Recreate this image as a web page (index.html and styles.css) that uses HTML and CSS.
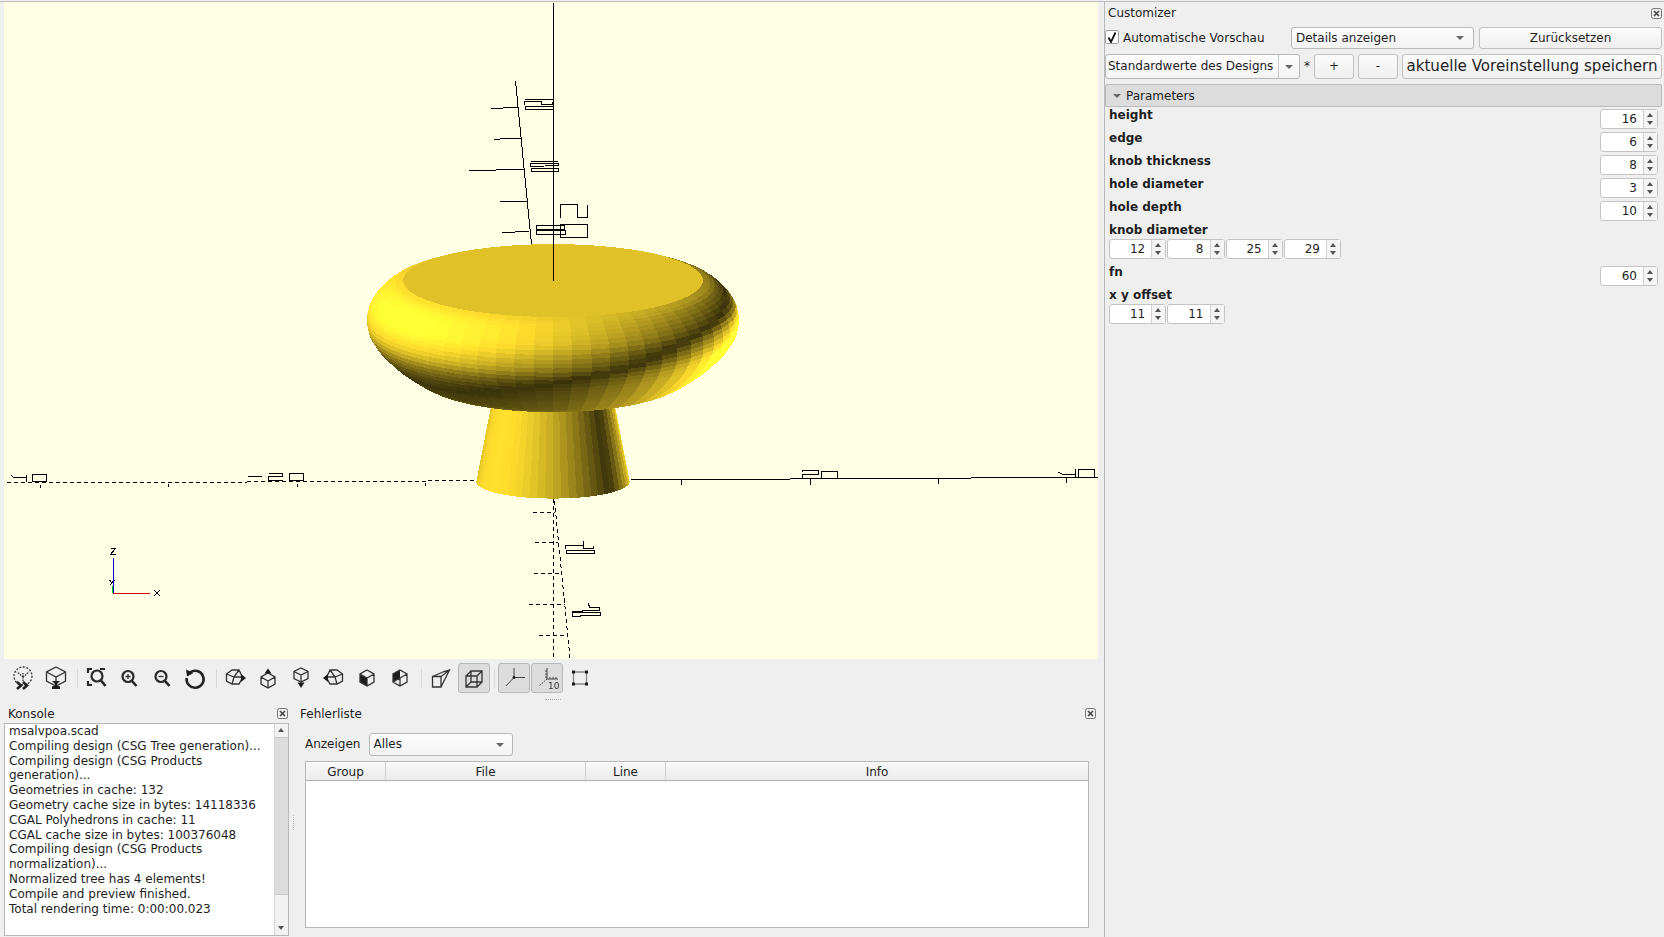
FILE: index.html
```html
<!DOCTYPE html>
<html lang="de">
<head>
<meta charset="utf-8">
<title>OpenSCAD</title>
<link rel="stylesheet" href="styles.css">
</head>
<body>
<svg class="defs" width="0" height="0" aria-hidden="true">
  <symbol id="close" viewBox="0 0 11 11">
    <rect x="0.5" y="0.5" width="10" height="10" rx="2" fill="none" stroke="#777"/>
    <path d="M3 3l5 5M8 3l-5 5" fill="none" stroke="#444" stroke-width="1.6"/>
  </symbol>
</svg>
<div class="app">
  <main class="left">
    <div class="viewport">
      <canvas id="preview" width="1094" height="657"></canvas>
      <svg class="overlay" viewBox="4 2 1094 657" width="1094" height="657" aria-hidden="true">
        <g class="ln">
          <path d="M553.5 3V281"/>
          <path d="M515.5 81L531.5 244"/>
          <path d="M491 108.5L503 108L518.5 107M494 139.5L511 138L521.5 138M469 170.5L524 169.5M500 201.5H527M502 232.5L529 231.5"/>
          <path d="M524.5 99.5H552.5M524.5 104.5V101.5H541.5V104.5H552.5V101.5M525.5 106.5H553V109.5H525.5Z"/>
          <path d="M530.5 161.5H558M530.5 163.5H558L558.7 165.5L530.5 166.5ZM531.5 168.5H558.5V171.5H531.5Z"/>
          <path d="M560.5 217.5V204.5H577V217.5H587.5V204.5M560.5 224.5H587.5V237.5H560.5ZM536 225.5H564V229H536ZM536 230.5H565V234H536Z"/>
          <path d="M631 479.5H790M790 478.5H971M971 477.5H1098"/>
          <path d="M681.5 480V485M810.5 479V485M938.5 478V484M1066.5 477V483"/>
          <path d="M802 472V470H818V474H802V478H818M821.500 471.500H837V478H821.500Z"/>
          <path d="M1058 472L1062 474H1075M1075 469V478M1078.500 469.500H1094V477H1078.500Z"/>
          <path d="M11 475.500L14 477.500H26.500M26.500 475V481.500M32.500 474.500H46.500V481.500H32.500Z"/>
          <path d="M248 476H262M268.500 473.500H282.500V476H268.500V480.500H282.500M289.500 473.500H303.500V480.500H289.500Z"/>
          <path d="M40.500 485V488M168.500 484V487M297.500 484V487M425.500 483V486"/>
          <path d="M565.500 549V545.500H583.500V548.500H593.500V546M583.500 541V545.500M566.500 550.500H594.500V553.500H566.500Z"/>
          <path d="M572 611.500H582V610.500H599.500V607.500H589.500L588.500 603.500M572.500 612.500H600.500V615.500H580V616.500H572.500Z"/>
          <path d="M110.500 548.500H115.500L110.500 554.500H115.500M154 590L160 596M160 590L154 596M109.500 580L112 583M114.500 580L109.500 585.500"/>
        </g>
        <g class="dash">
          <path d="M7 482.500H247M247 481.500H427M428 480.500H477"/>
          <path d="M553.500 499V659M554.500 501L570 658"/>
          <path d="M533 512.500H555M535 542.500H558M534 573.500H561M528.500 604.500H565M539 635.500H568"/>
        </g>
        <path class="ax-b" d="M113.500 558V593"/>
        <path class="ax-g" d="M112.500 586V593"/>
        <path class="ax-r" d="M113 593.500H150"/>
      </svg>
    </div>

    <div class="toolbar">
      <div class="tool"><svg class="ic" viewBox="0 0 24 24"><circle cx="12" cy="10" r="9" stroke-dasharray="2 1.500"/><path d="M12 11V7M12 11L6 6M12 11l6-5M12 11v4" stroke-dasharray="1.500 1"/><path class="thick" d="M6 16l4 3.500-4 3.500M12 16l4 3.500-4 3.500"/></svg></div>
      <div class="tool"><svg class="ic" viewBox="0 0 24 24"><path d="M12 1l9.500 5v9L12 20l-9.500-5V6zM2.500 6L12 11l9.500-5M12 11v4"/><path class="solid" d="M8 15h8l-3 3v1.500l3 1V23H8v-2.500l3-1V18z"/></svg></div>
      <div class="sep"></div>
      <div class="tool"><svg class="ic" viewBox="0 0 24 24"><path class="mid" d="M8 3H4v4M16 3h4v1M4 15v4h4"/><circle class="mid" cx="13" cy="10" r="5.500"/><path class="thick" d="M17 14.500l4.500 5.500"/></svg></div>
      <div class="tool"><svg class="ic" viewBox="0 0 24 24"><circle class="mid" cx="11" cy="10.500" r="5.500"/><path class="thick" d="M15 15l4.500 5"/><path d="M8.500 10.500h5M11 8v5"/></svg></div>
      <div class="tool"><svg class="ic" viewBox="0 0 24 24"><circle class="mid" cx="11" cy="10.500" r="5.500"/><path class="thick" d="M15 15l4.500 5"/><path d="M8.500 10.500h5"/></svg></div>
      <div class="tool"><svg class="ic" viewBox="0 0 24 24"><path class="thick" d="M7 6.500A8.500 8.500 0 1 1 3.700 12"/><path class="solid" d="M3 3.500l1 7 6.500-3.500z"/></svg></div>
      <div class="sep"></div>
      <div class="tool"><svg class="ic" viewBox="0 0 24 24"><path d="M3.500 8L9 4h7l3.500 7.500L16 18H9l-5.500-3zM3.500 8l7.500 3 5-7M11 11l-2 7M11 11h8.500"/><path class="solid" d="M18 8l5 4-5 4z"/></svg></div>
      <div class="tool"><svg class="ic" viewBox="0 0 24 24"><path d="M12 7l7 4v7l-7 4-7-4v-7zM5 11l7 4 7-4M12 15v7"/><path class="solid" d="M12 2.500l3.500 5h-7z"/></svg></div>
      <div class="tool"><svg class="ic" viewBox="0 0 24 24"><path d="M12 2l7 3.500v7L12 16l-7-3.500v-7zM5 5.500L12 9l7-3.500M12 9v7"/><path class="solid" d="M12 22l-3.500-5.500h7z"/></svg></div>
      <div class="tool"><svg class="ic" viewBox="0 0 24 24"><path d="M20.500 8L15 4H8l-3.500 7.500L8 18h7l5.500-3zM20.500 8L13 11 8 4M13 11l2 7M13 11H4.500"/><path class="solid" d="M6 8l-5 4 5 4z"/></svg></div>
      <div class="tool"><svg class="ic" viewBox="0 0 24 24"><path class="solid" d="M5 8l7 4v8l-7-4z"/><path d="M12 4l7 4v8l-7 4-7-4V8zM5 8l7 4 7-4M12 12v8"/></svg></div>
      <div class="tool"><svg class="ic" viewBox="0 0 24 24"><path class="solid" d="M12 4v8l-7 4V8z"/><path d="M12 4l7 4v8l-7 4-7-4V8zM12 12l7-4M12 12v8M12 12l-7 4"/></svg></div>
      <div class="sep sep-wide"></div>
      <div class="tool"><svg class="ic" viewBox="0 0 24 24"><path d="M3.500 10.500H12V21H3.500zM3.500 10.500L15 5.500l5.500-1.500L12 21M12 10.500L20.500 4"/></svg></div>
      <div class="tool tool-on"><svg class="ic" viewBox="0 0 24 24"><path d="M4 10h11v11H4zM9 5h11v11H9zM4 10l5-5M15 10l5-5M15 21l5-5M4 21l5-5"/></svg></div>
      <div class="sep sep-near"></div>
      <div class="tool tool-on"><svg class="ic ic-thin" viewBox="0 0 24 24"><path d="M12 11.500V2M12 11.500H23M12 11.500L4 20"/><circle class="solid" cx="12" cy="11.500" r="1.400"/></svg></div>
      <div class="tool tool-on"><svg class="ic ic-thin" viewBox="0 0 24 24"><path d="M12 13V2M12 13H23M10 5h2M10 8h2M10 11h2M15 11v2M18 11v2M21 11v2"/><path d="M12 13l-8 7" stroke-dasharray="1.500 1"/><text x="13" y="23" class="ic-num">10</text></svg></div>
      <div class="tool"><svg class="ic" viewBox="0 0 24 24"><path class="soft" d="M5.500 6h13M5.500 18h13M5.500 6v12M18.500 6v12"/><path class="solid" d="M4 4.500h3v3H4zM17 4.500h3v3h-3zM4 16.500h3v3H4zM17 16.500h3v3h-3z"/></svg></div>
      <div class="grip"></div>
    </div>

    <div class="docks">
      <section class="dock-console">
        <header class="dock-title"><span>Konsole</span><svg class="close"><use href="#close"/></svg></header>
        <div class="console">
          <div class="console-text">
            <div>msalvpoa.scad</div>
            <div>Compiling design (CSG Tree generation)...</div>
            <div>Compiling design (CSG Products generation)...</div>
            <div>Geometries in cache: 132</div>
            <div>Geometry cache size in bytes: 14118336</div>
            <div>CGAL Polyhedrons in cache: 11</div>
            <div>CGAL cache size in bytes: 100376048</div>
            <div>Compiling design (CSG Products normalization)...</div>
            <div>Normalized tree has 4 elements!</div>
            <div>Compile and preview finished.</div>
            <div>Total rendering time: 0:00:00.023</div>
          </div>
          <div class="scrollbar">
            <div class="sb-btn sb-up"></div>
            <div class="sb-thumb"></div>
            <div class="sb-track"></div>
            <div class="sb-btn sb-down"></div>
          </div>
        </div>
      </section>
      <div class="dock-split"></div>
      <section class="dock-errors">
        <header class="dock-title"><span>Fehlerliste</span><svg class="close"><use href="#close"/></svg></header>
        <div class="filter">
          <span>Anzeigen</span>
          <div class="combo combo-filter"><span>Alles</span><i class="tri"></i></div>
        </div>
        <div class="table">
          <div class="thead">
            <div class="th">Group</div>
            <div class="th">File</div>
            <div class="th">Line</div>
            <div class="th">Info</div>
          </div>
        </div>
      </section>
    </div>
  </main>

  <aside class="right">
    <header class="dock-title cust-title"><span>Customizer</span><svg class="close"><use href="#close"/></svg></header>
    <div class="row-a">
      <div class="check"><svg viewBox="0 0 12 12"><path d="M2.500 6.500l2.500 4.500L9.500 1.500" fill="none" stroke="#111" stroke-width="1.800"/></svg></div>
      <span class="check-label">Automatische Vorschau</span>
      <div class="combo combo-details"><span>Details anzeigen</span><i class="tri"></i></div>
      <div class="btn btn-reset">Zurücksetzen</div>
    </div>
    <div class="row-b">
      <div class="combo combo-preset"><span>Standardwerte des Designs</span><div class="combo-drop"><i class="tri"></i></div></div>
      <span class="star">*</span>
      <div class="btn btn-small">+</div>
      <div class="btn btn-small">-</div>
      <div class="btn btn-save">aktuelle Voreinstellung speichern</div>
    </div>
    <div class="group-head"><i class="tri"></i><span>Parameters</span></div>
    <div class="params">
      <div class="param"><b>height</b><div class="spin"><span>16</span><div class="arr"></div></div></div>
      <div class="param"><b>edge</b><div class="spin"><span>6</span><div class="arr"></div></div></div>
      <div class="param"><b>knob thickness</b><div class="spin"><span>8</span><div class="arr"></div></div></div>
      <div class="param"><b>hole diameter</b><div class="spin"><span>3</span><div class="arr"></div></div></div>
      <div class="param"><b>hole depth</b><div class="spin"><span>10</span><div class="arr"></div></div></div>
      <div class="param-vec">
        <b>knob diameter</b>
        <div class="spins">
          <div class="spin"><span>12</span><div class="arr"></div></div>
          <div class="spin"><span>8</span><div class="arr"></div></div>
          <div class="spin"><span>25</span><div class="arr"></div></div>
          <div class="spin"><span>29</span><div class="arr"></div></div>
        </div>
      </div>
      <div class="param"><b>fn</b><div class="spin"><span>60</span><div class="arr"></div></div></div>
      <div class="param-vec">
        <b>x y offset</b>
        <div class="spins">
          <div class="spin"><span>11</span><div class="arr"></div></div>
          <div class="spin"><span>11</span><div class="arr"></div></div>
        </div>
      </div>
    </div>
  </aside>
</div>
<script src="script.js"></script>
</body>
</html>
```

FILE: styles.css
```css
* { box-sizing: border-box; }
html, body { margin: 0; padding: 0; }
body {
  width: 1664px;
  height: 937px;
  overflow: hidden;
  background: #efefef;
  color: #1e1e1e;
  font: 12px/15px "DejaVu Sans", sans-serif;
}
.defs { position: absolute; }
.app {
  display: flex;
  height: 936px;
  margin-top: 1px;
  border-top: 1px solid #bdbdbd;
}

/* left column */
.left { width: 1104px; padding-left: 4px; display: flex; flex-direction: column; position: relative; }
.viewport { position: relative; width: 1094px; height: 657px; background: #ffffe5; flex: none; }
#preview { display: block; }
.overlay { position: absolute; left: 0; top: 0; shape-rendering: crispEdges; }
.overlay path { fill: none; }
.ln path { stroke: #000; stroke-width: 1; }
.dash path { stroke: #000; stroke-width: 1; stroke-dasharray: 4 3; }
.ax-b { stroke: #0000d0; }
.ax-g { stroke: #00d000; }
.ax-r { stroke: #d00000; }

/* toolbar */
.toolbar { display: flex; gap: 1px; height: 41px; padding: 4px 0 0 3px; flex: none; position: relative; }
.tool { width: 32px; height: 30px; display: flex; align-items: center; justify-content: center; border: 1px solid transparent; border-radius: 3px; }
.tool-on { background: #dcdcdc; border-color: #b8b8b8; }
.ic { width: 24px; height: 24px; fill: none; stroke: #333; stroke-width: 1.3; }
.ic-thin { stroke: #444; stroke-width: 1; }
.ic .thick { stroke: #222; stroke-width: 2.6; fill: none; }
.ic .mid { stroke: #2a2a2a; stroke-width: 2.2; fill: none; }
.ic .solid { fill: #1c1c1c; stroke: none; }
.ic .soft { stroke: #888; stroke-width: 1.3; }
.ic-num { font: 9px "DejaVu Sans", sans-serif; fill: #333; stroke: none; }
.sep { width: 1px; height: 19px; margin: 6px 1px 0 4px; background: #d6d6d6; }
.sep-wide { margin-right: 2px; }
.sep-near { margin-left: 3px; margin-right: 2px; }
.grip { position: absolute; left: 541px; top: 40px; width: 16px; border-top: 1px dotted #b0b0b0; }

/* docks */
.docks { display: flex; flex: 1; min-height: 0; }
.dock-title { height: 23px; display: flex; align-items: center; justify-content: space-between; flex: none; }
.docks .dock-title span { margin-top: 2px; }
.close { width: 11px; height: 11px; }
.dock-console { width: 285px; display: flex; flex-direction: column; flex: none; }
.dock-console .dock-title { padding: 4px 1px 0 4px; }
.console { height: 213px; display: flex; border: 1px solid #b8b8b8; background: #fff; }
.console-text { flex: 1; padding-left: 4px; line-height: 14.8px; min-width: 0; }
.scrollbar { width: 14px; display: flex; flex-direction: column; border-left: 1px solid #d8d8d8; flex: none; }
.sb-btn { height: 13px; background: #f2f2f2; position: relative; flex: none; }
.sb-up::after, .sb-down::after { content: ""; position: absolute; left: 3px; top: 4px; border: 3.500px solid transparent; border-top: 0; border-bottom: 4px solid #555; }
.sb-down::after { border-bottom: 0; border-top: 4px solid #555; }
.sb-thumb { height: 158px; background: #dcdcdc; border: solid #c8c8c8; border-width: 1px 0; flex: none; }
.sb-track { flex: 1; background: #f1f1f1; }
.dock-split { width: 11px; flex: none; position: relative; }
.dock-split::after { content: ""; position: absolute; left: 4px; top: 115px; height: 15px; border-left: 1px dotted #b8b8b8; }
.dock-errors { flex: 1; display: flex; flex-direction: column; min-width: 0; padding-left: 0; }
.dock-errors .dock-title { padding: 4px 8px 0 0; }
.filter { display: flex; align-items: center; height: 23px; margin-top: 10px; padding-left: 5px; gap: 9px; }
.table { margin-top: 5px; margin-left: 5px; width: 784px; height: 167px; border: 1px solid #b8b8b8; background: #fff; }
.thead { display: grid; grid-template-columns: 80px 200px 80px 1fr; height: 19px; background: linear-gradient(#f9f9f9, #ebebeb); border-bottom: 1px solid #b0b0b0; }
.th { text-align: center; line-height: 20px; border-right: 1px solid #cfcfcf; }
.th:last-child { border-right: 0; }

/* combos and buttons */
.combo { display: flex; align-items: center; justify-content: space-between; background: linear-gradient(#fdfdfd, #f3f3f3); border: 1px solid #b8b8b8; border-radius: 3px; padding: 0 8px 0 4px; flex: none; }
.tri { display: block; width: 0; height: 0; border: 4px solid transparent; border-top: 4px solid #666; border-bottom: 0; }
.combo-filter { width: 144px; height: 23px; padding-left: 3px; }
.btn { display: flex; align-items: center; justify-content: center; background: linear-gradient(#fbfbfb, #efefef); border: 1px solid #c0c0c0; border-radius: 3px; flex: none; }

/* right column */
.right { width: 560px; border-left: 1px solid #b8b8b8; flex: none; }
.cust-title { height: 25px; padding: 0 2px 3px 3px; }
.row-a { display: flex; align-items: center; height: 22px; }
.check { width: 14px; height: 14px; margin-top: -2px; background: #fff; border: 1px solid #a0a0a0; border-radius: 2px; flex: none; display: flex; }
.check svg { width: 12px; height: 12px; }
.check-label { margin-left: 4px; width: 168px; flex: none; }
.combo-details { width: 183px; height: 22px; padding-right: 9px; }
.btn-reset { width: 183px; height: 22px; margin-left: 5px; }
.row-b { display: flex; align-items: center; height: 25px; margin-top: 5px; }
.combo-preset { width: 195px; height: 25px; padding: 0 0 0 2px; }
.combo-drop { width: 21px; height: 100%; border-left: 1px solid #c8c8c8; display: flex; align-items: center; justify-content: center; }
.star { width: 14px; text-align: center; }
.btn-small { width: 40px; height: 25px; margin-right: 4px; }
.btn-save { width: 260px; height: 25px; font-size: 15.1px; white-space: nowrap; }
.group-head { display: flex; align-items: center; gap: 5px; height: 23px; margin-top: 5px; padding: 1px 0 0 7px; width: 557px; background: #dcdcdc; border: 1px solid #bcbcbc; border-radius: 2px; }
.params { padding: 2px 4px 0 4px; width: 557px; }
.param { display: flex; justify-content: space-between; height: 23px; }
.param b, .param-vec b { display: block; line-height: 13px; }
.param-vec { margin-bottom: 7px; }
.param-vec b { margin-bottom: 2px; }
.spins { display: flex; gap: 1px; }
.spin { width: 58px; height: 20px; display: flex; background: #fff; border: 1px solid #c4c4c4; border-radius: 3px; flex: none; }
.spins .spin { width: 57.25px; }
.spin span { flex: 1; text-align: right; padding-right: 6px; line-height: 19px; }
.arr { width: 14px; border-left: 1px solid #d0d0d0; background: #f4f4f4; position: relative; flex: none; }
.arr::before, .arr::after { content: ""; position: absolute; left: 3px; border: 3.500px solid transparent; }
.arr::before { top: 3px; border-top: 0; border-bottom: 4px solid #555; }
.arr::after { top: 11px; border-bottom: 0; border-top: 4px solid #555; }
```

FILE: script.js
```js
(function () {
  var canvas = document.getElementById('preview');
  var ctx = canvas.getContext('2d');
  var W = canvas.width, H = canvas.height;
  var img = ctx.createImageData(W, H);
  var OX = 4, OY = 2, CX = 553, N = 60;
  var E = 14 * Math.PI / 180;
  var BASE = [249, 215, 44];
  var CAP = { l: [-0.66, 0.51, 0.55], k: 0.98 };
  var STEM = { l: [-0.62, 0.45, 0.64], k: 0.9 };

  function clamp(v) { return Math.max(0, Math.min(255, Math.round(v))); }
  /* lit side and far side use different gains; the far side gets brighter to the right */
  function shade(dot, vx, light) {
    var g = dot >= 0 ? 1 : 0.6 + 1.2 * Math.max(0, vx);
    var s = Math.min(1.2, 0.23 + light.k * Math.abs(dot) * g);
    return [clamp(BASE[0] * s), clamp(BASE[1] * s), clamp(BASE[2] * s)];
  }
  function fill(poly, col) {
    var minY = Infinity, maxY = -Infinity, i;
    for (i = 0; i < poly.length; i++) {
      minY = Math.min(minY, poly[i][1]);
      maxY = Math.max(maxY, poly[i][1]);
    }
    for (var y = Math.max(0, Math.floor(minY)); y <= Math.min(H - 1, Math.ceil(maxY)); y++) {
      var yc = y + 0.5, lo = Infinity, hi = -Infinity;
      for (i = 0; i < poly.length; i++) {
        var a = poly[i], b = poly[(i + 1) % poly.length];
        if ((a[1] <= yc) !== (b[1] <= yc)) {
          var x = a[0] + (yc - a[1]) * (b[0] - a[0]) / (b[1] - a[1]);
          lo = Math.min(lo, x);
          hi = Math.max(hi, x);
        }
      }
      if (lo > hi) continue;
      for (var px = Math.max(0, Math.round(lo)); px < Math.min(W, Math.round(hi)); px++) {
        var k = (y * W + px) * 4;
        img.data[k] = col[0];
        img.data[k + 1] = col[1];
        img.data[k + 2] = col[2];
        img.data[k + 3] = 255;
      }
    }
  }
  function pt(r, cy, tilt, phi) {
    return [CX - OX + r * Math.cos(phi), cy - OY + r * tilt * Math.sin(phi)];
  }
  function area(p) {
    var s = 0;
    for (var i = 0; i < p.length; i++) {
      var q = p[(i + 1) % p.length];
      s += p[i][0] * q[1] - q[0] * p[i][1];
    }
    return s;
  }
  /* one band of facets between an upper ring and a lower ring */
  function strip(r0, c0, t0, r1, c1, t1, light) {
    var dr = r1 - r0, dh = (c0 - c1) / Math.cos(E);
    var len = Math.sqrt(dr * dr + dh * dh) || 1;
    var nr = -dh / len, nz = dr / len, L = light.l;
    for (var i = 0; i < N; i++) {
      var p0 = 2 * Math.PI * i / N, p1 = 2 * Math.PI * (i + 1) / N, pm = (p0 + p1) / 2;
      var q = [pt(r0, c0, t0, p0), pt(r0, c0, t0, p1), pt(r1, c1, t1, p1), pt(r1, c1, t1, p0)];
      if (area(q) >= 0) continue;
      var nx = nr * Math.cos(pm), nf = nr * Math.sin(pm);
      var vy = nz * Math.cos(E) - nf * Math.sin(E);
      var vz = nf * Math.cos(E) + nz * Math.sin(E);
      fill(q, shade(nx * L[0] + vy * L[1] + vz * L[2], nx, light));
    }
  }
  function catmull(P, sub) {
    var out = [];
    for (var i = 0; i < P.length - 1; i++) {
      var a = P[Math.max(0, i - 1)], b = P[i], c = P[i + 1], d = P[Math.min(P.length - 1, i + 2)];
      for (var j = 0; j < sub; j++) {
        var t = j / sub, t2 = t * t, t3 = t2 * t, o = [];
        for (var m = 0; m < 2; m++) {
          o[m] = 0.5 * (2 * b[m] + (c[m] - a[m]) * t + (2 * a[m] - 5 * b[m] + 4 * c[m] - d[m]) * t2 + (3 * b[m] - a[m] - 3 * c[m] + d[m]) * t3);
        }
        out.push(o);
      }
    }
    out.push(P[P.length - 1]);
    return out;
  }

  /* stem */
  strip(60, 396, 0.22, 76.7, 481.7, 0.22, STEM);

  /* cap: drawn from its underside up so that the rim covers the rings below */
  var prof = catmull([[150, 280.5], [162, 285], [174, 294], [183, 306], [186, 319], [184, 332], [176, 345], [163, 358], [150, 368], [130, 380], [110, 385], [85, 390], [60, 394]], 3);
  for (var i = prof.length - 1; i > 0; i--) {
    strip(prof[i - 1][0], prof[i - 1][1], 0.243, prof[i][0], prof[i][1], 0.243, CAP);
  }

  /* flat top */
  var disc = [];
  for (var d = 0; d < N; d++) disc.push(pt(150, 280.5, 0.243, 2 * Math.PI * d / N));
  fill(disc, [224, 194, 40]);

  ctx.putImageData(img, 0, 0);
})();
```
